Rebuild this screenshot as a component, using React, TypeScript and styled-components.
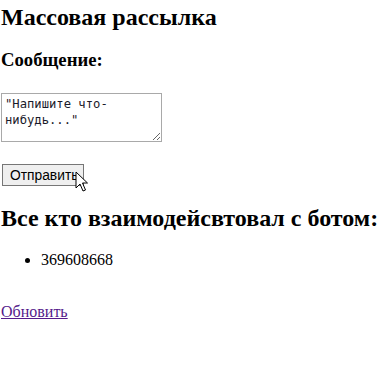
import React from "react";
import styled, { createGlobalStyle } from "styled-components";

const Global = createGlobalStyle`
  html, body { margin: 0; padding: 0; background: #fff; }
  body { font-family: "Liberation Serif", "Times New Roman", serif; font-size: 16px; color: #000; }
`;

const Page = styled.div`
  position: relative;
  padding: 0 1px;
`;

const Title = styled.h2`
  font-size: 24px;
  font-weight: bold;
  margin: 4px 0 0;
`;

const Label = styled.h3`
  font-size: 18.72px;
  font-weight: bold;
  margin: 18px 0 0;
`;

const Form = styled.form`
  margin: 0;
  display: flex;
  flex-direction: column;
  align-items: flex-start;
`;

const Message = styled.textarea`
  margin: 22px 0 0;
  width: 161px;
  height: 49px;
  box-sizing: border-box;
  font-family: "DejaVu Sans Mono", "Liberation Mono", monospace;
  font-size: 12.2px;
  line-height: 16px;
  color: #1a1a2a;
  border: 1px solid #a9a9a9;
  padding: 2px 3px;
  resize: both;
`;

const Send = styled.button`
  margin: 22px 0 0 1px;
  font-family: "Liberation Sans", Arial, sans-serif;
  font-size: 13.8px;
  padding: 1px 5px 1px 7px;
  height: 22px;
  background: #efefef;
  border: 1px solid #767676;
  border-radius: 0;
  color: #000;
`;

const Subtitle = styled.h2`
  font-size: 24px;
  font-weight: bold;
  margin: 19px 0 0;
`;

const Users = styled.ul`
  margin: 19px 0 0;
  padding-left: 40px;
`;

const User = styled.li``;

const Refresh = styled.a`
  display: inline-block;
  margin-top: 34px;
  color: #551a8b;
  text-decoration: underline;
`;

const Cursor = styled.svg`
  position: absolute;
  left: 75px;
  top: 167px;
`;

export default function App() {
  return (
    <>
      <Global />
      <Page>
        <Title>Массовая рассылка</Title>
        <Label>Сообщение:</Label>
        <Form onSubmit={(e) => e.preventDefault()}>
          <Message defaultValue={'"Напишите что-нибудь..."'} />
          <Send type="submit">Отправить</Send>
        </Form>
        <Subtitle>Все кто взаимодейсвтовал с ботом:</Subtitle>
        <Users>
          <User>369608668</User>
        </Users>
        <Refresh href="#">Обновить</Refresh>
        <Cursor width="14" height="22" viewBox="0 0 14 22">
          <path d="M1 1 L1 17 L5 13 L8 20 L10.5 19 L7.5 12 L12.5 12 Z" fill="#fff" stroke="#000" strokeWidth="1" strokeLinejoin="round" />
        </Cursor>
      </Page>
    </>
  );
}
